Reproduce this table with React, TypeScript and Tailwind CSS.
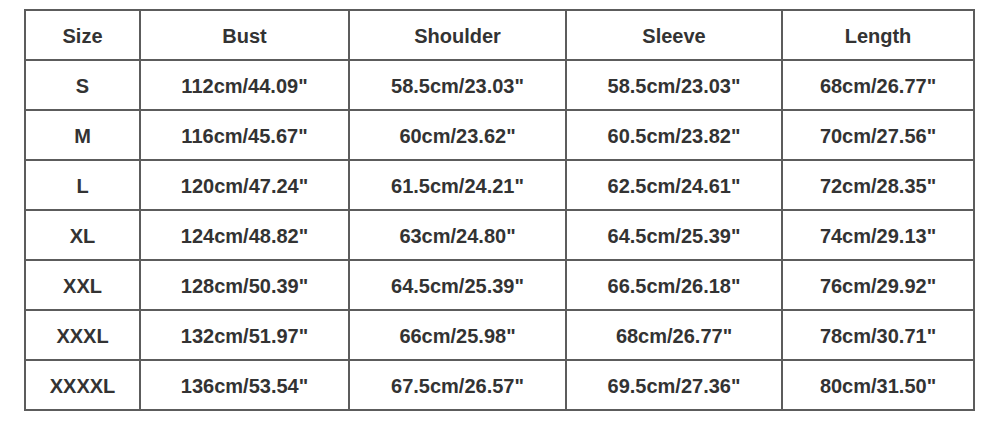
const headers = ["Size", "Bust", "Shoulder", "Sleeve", "Length"];

const rows = [
  ["S", '112cm/44.09"', '58.5cm/23.03"', '58.5cm/23.03"', '68cm/26.77"'],
  ["M", '116cm/45.67"', '60cm/23.62"', '60.5cm/23.82"', '70cm/27.56"'],
  ["L", '120cm/47.24"', '61.5cm/24.21"', '62.5cm/24.61"', '72cm/28.35"'],
  ["XL", '124cm/48.82"', '63cm/24.80"', '64.5cm/25.39"', '74cm/29.13"'],
  ["XXL", '128cm/50.39"', '64.5cm/25.39"', '66.5cm/26.18"', '76cm/29.92"'],
  ["XXXL", '132cm/51.97"', '66cm/25.98"', '68cm/26.77"', '78cm/30.71"'],
  ["XXXXL", '136cm/53.54"', '67.5cm/26.57"', '69.5cm/27.36"', '80cm/31.50"'],
];

const colWidths = ["w-[115px]", "w-[209px]", "w-[217px]", "w-[216px]", "w-[192px]"];

export default function App() {
  return (
    <div className="w-[1000px] h-[421px] bg-white pt-[9px] pl-[24px] font-['Liberation_Sans',Arial,sans-serif]">
      <table className="border-collapse table-fixed w-[951px] text-[20px] leading-none font-bold text-[#333]">
        <colgroup>
          {colWidths.map((w, i) => (
            <col key={i} className={w} />
          ))}
        </colgroup>
        <thead>
          <tr className="h-[50px]">
            {headers.map((h) => (
              <th key={h} className="border-2 border-[#5c5c5c] text-center align-middle font-bold pt-[1px]">
                {h}
              </th>
            ))}
          </tr>
        </thead>
        <tbody>
          {rows.map((row) => (
            <tr key={row[0]} className="h-[50px]">
              {row.map((cell, i) => (
                <td key={i} className="border-2 border-[#5c5c5c] text-center align-middle pt-[1px]">
                  {cell}
                </td>
              ))}
            </tr>
          ))}
        </tbody>
      </table>
    </div>
  );
}
